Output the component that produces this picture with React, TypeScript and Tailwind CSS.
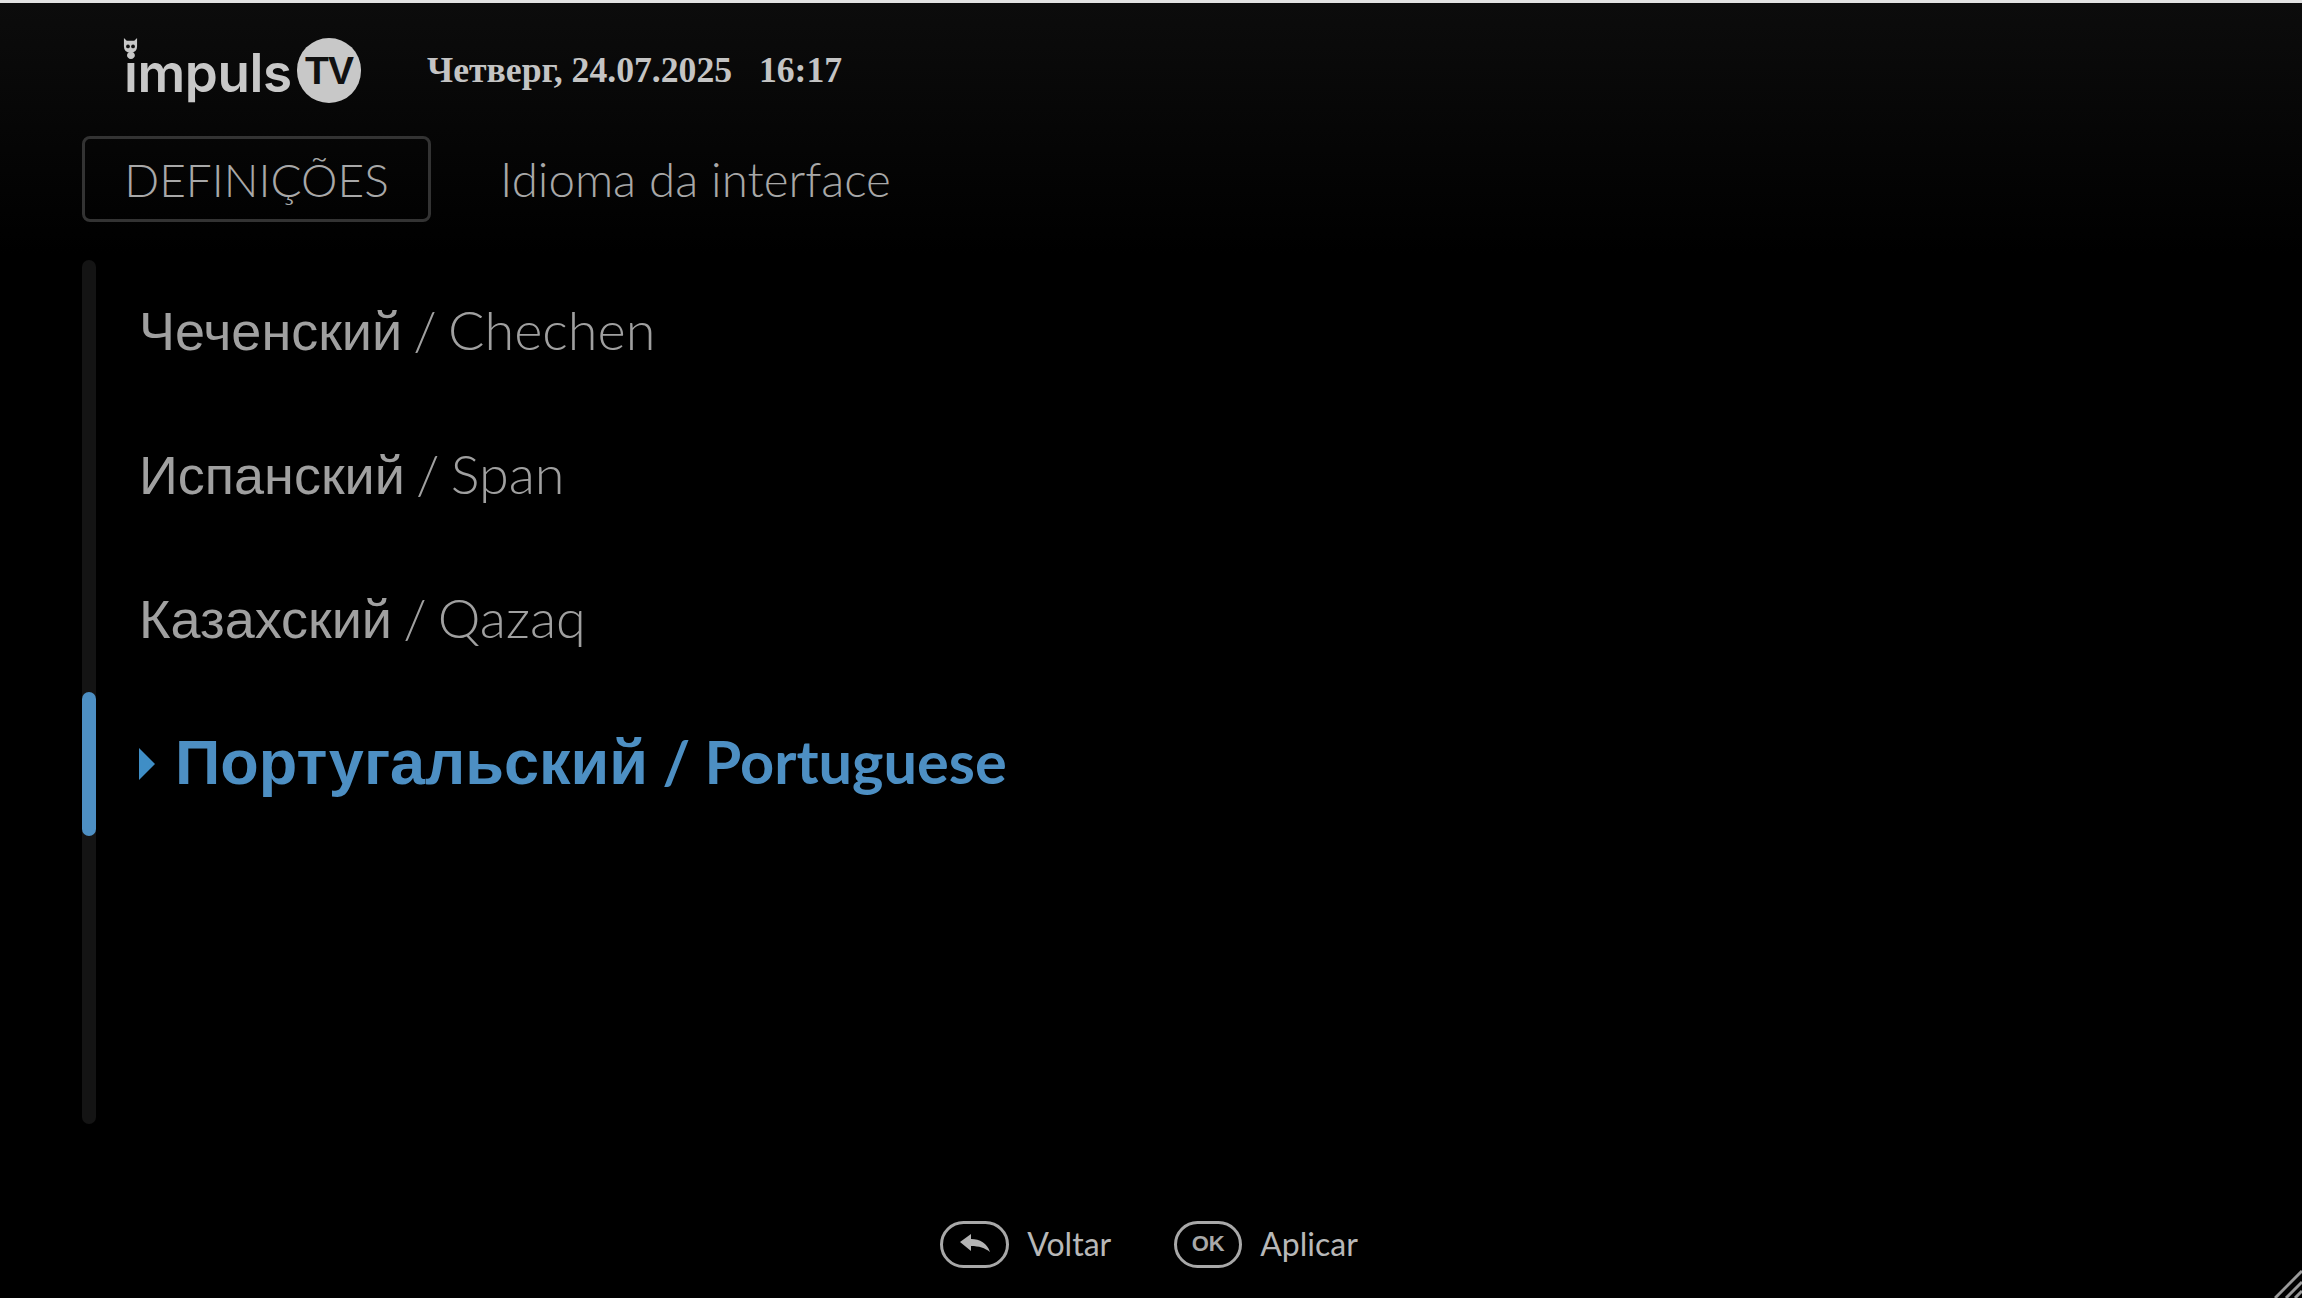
const latin = "font-['Lato','Open_Sans',sans-serif]";
const cyr = "font-['Liberation_Sans',Arial,sans-serif]";

const languages = [
  { ru: "Чеченский", en: "Chechen" },
  { ru: "Испанский", en: "Span" },
  { ru: "Казахский", en: "Qazaq" },
];

function Logo() {
  return (
    <div className="relative h-[70px] w-[239px]">
      {/* cat on top of the i */}
      <svg className="absolute left-[1px] top-[3px] h-[15px] w-[15px]" viewBox="0 0 15 16">
        <path d="M0.5 0 L3.5 3 H11.5 L14.5 0 V9 Q14.5 15.5 7.5 15.5 Q0.5 15.5 0.5 9 Z" fill="#c8c8c8" />
        <circle cx="4.8" cy="9" r="2" fill="#111" />
        <circle cx="10.2" cy="9" r="2" fill="#111" />
      </svg>
      <span className="absolute left-[2px] top-[12px] font-['Inter',sans-serif] text-[53px] font-semibold leading-[53px] tracking-[-0.4px] text-[#c8c8c8]">
        impuls
      </span>
      <div className="absolute right-0 top-[3px] flex h-[65px] w-[64px] items-center justify-center rounded-full bg-[#c8c8c8]">
        <span className="font-['Liberation_Sans',sans-serif] text-[39px] font-bold leading-none tracking-[-1px] text-[#111]">
          TV
        </span>
      </div>
    </div>
  );
}

function BackIcon() {
  return (
    <svg className="h-[20px] w-[30px]" viewBox="0 0 30 20">
      <path d="M0 8 L11 0 V5 C20 5 27 9 30 18 C25 14 19 12 11 12 V17 Z" fill="#b4b4b4" />
    </svg>
  );
}

export default function App() {
  return (
    <div className="relative flex h-[1298px] w-[2302px] flex-col overflow-hidden border-t-[3px] border-[#e2e2e2] bg-[linear-gradient(#0c0c0c,#000_250px)]">
      {/* Header */}
      <div className="flex items-center pl-[122px] pt-[32px]">
        <Logo />
        <div className="ml-[66px] mt-[2px] whitespace-pre font-['Liberation_Serif',serif] text-[35.7px] font-bold leading-none text-[#c4c4c4]">
          Четверг, 24.07.2025   16:17
        </div>
      </div>

      {/* Breadcrumb */}
      <div className="mt-[31px] flex items-center pl-[82px]">
        <div className={`flex h-[86px] w-[349px] items-center justify-center rounded-[8px] border-[3px] border-[#333] text-[46px] text-[#a8a8a8] ${latin} font-light`}>
          DEFINIÇÕES
        </div>
        <div className={`ml-[69px] text-[47.5px] text-[#a8a8a8] ${latin} font-light`}>Idioma da interface</div>
      </div>

      {/* List */}
      <div className="mt-[38px] flex pl-[82px]">
        <div className="relative h-[864px] w-[14px] rounded-full bg-[#141414]">
          <div className="absolute left-0 top-[432px] h-[144px] w-[14px] rounded-full bg-[#4d8fc3]" />
        </div>
        <ul className="ml-[43px] flex flex-col">
          {languages.map((l) => (
            <li key={l.en} className="flex h-[144px] items-center text-[#a0a0a0]">
              <div className="whitespace-pre pb-[3px]">
                <span className={`${cyr} text-[54px]`}>{l.ru}</span>
                <span className={`${latin} text-[54px] font-light [word-spacing:-3.5px]`}> / {l.en}</span>
              </div>
            </li>
          ))}
          <li className="flex h-[144px] items-center font-bold text-[#4d8fc3]">
            <svg className="mr-[20px] h-[32px] w-[16px]" viewBox="0 0 16 32">
              <path d="M0 0 L16 16 L0 32 Z" fill="#3f8ec6" />
            </svg>
            <div className="whitespace-pre pb-[3px]">
              <span className={`${cyr} text-[63px]`}>Португальский</span>
              <span className={`${latin} text-[59.5px]`}> / Portuguese</span>
            </div>
          </li>
        </ul>
      </div>

      {/* Footer */}
      <div className={`mt-[96px] flex items-center justify-center pr-[4px] text-[32px] text-[#b8b8b8] ${latin}`}>
        <div className="flex h-[47px] w-[69px] items-center justify-center rounded-full border-[3px] border-[#a8a8a8]">
          <BackIcon />
        </div>
        <span className="ml-[18px]">Voltar</span>
        <div className="ml-[63px] flex h-[47px] w-[68px] items-center justify-center rounded-full border-[3px] border-[#a8a8a8]">
          <span className="font-['Liberation_Sans',sans-serif] text-[22px] font-bold leading-none text-[#a8a8a8]">OK</span>
        </div>
        <span className="ml-[18px]">Aplicar</span>
      </div>

      {/* Resize grip */}
      <svg className="absolute bottom-0 right-0 h-[28px] w-[28px]" viewBox="0 0 28 28">
        <path d="M1 28 L28 1 M12 28 L28 12 M21 28 L28 21" stroke="#9a9a9a" strokeWidth="3" fill="none" />
      </svg>
    </div>
  );
}
